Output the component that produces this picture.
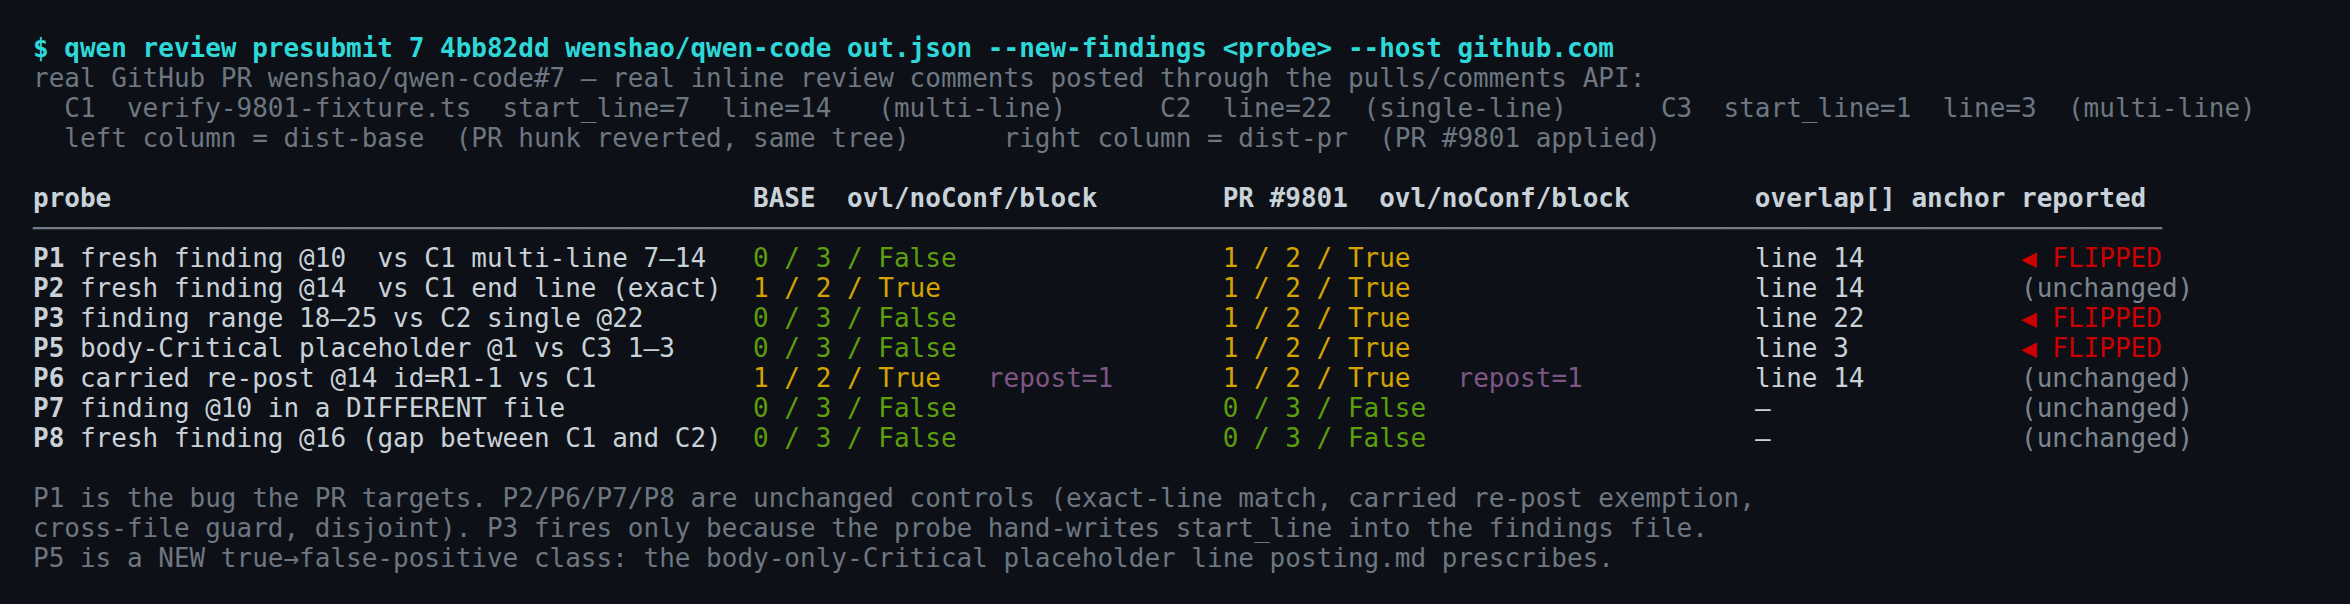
import React from "react"

type Val = "F" | "T"

type Row = {
  id: string
  desc: string
  base: Val
  pr: Val
  repost?: boolean
  anchor: string
  flipped: boolean
}

const rows: Row[] = [
  { id: "P1", desc: "fresh finding @10  vs C1 multi-line 7–14", base: "F", pr: "T", anchor: "line 14", flipped: true },
  { id: "P2", desc: "fresh finding @14  vs C1 end line (exact)", base: "T", pr: "T", anchor: "line 14", flipped: false },
  { id: "P3", desc: "finding range 18–25 vs C2 single @22", base: "F", pr: "T", anchor: "line 22", flipped: true },
  { id: "P5", desc: "body-Critical placeholder @1 vs C3 1–3", base: "F", pr: "T", anchor: "line 3", flipped: true },
  { id: "P6", desc: "carried re-post @14 id=R1-1 vs C1", base: "T", pr: "T", repost: true, anchor: "line 14", flipped: false },
  { id: "P7", desc: "finding @10 in a DIFFERENT file", base: "F", pr: "F", anchor: "–", flipped: false },
  { id: "P8", desc: "fresh finding @16 (gap between C1 and C2)", base: "F", pr: "F", anchor: "–", flipped: false },
]

// terminal columns: probe 0, BASE 46, PR 76, anchor 110, reported 127
function Verdict({ v, repost, width }: { v: Val; repost?: boolean; width: number }) {
  const text = v === "T" ? "1 / 2 / True" : "0 / 3 / False"
  const tail = repost ? "   repost=1" : ""
  const pad = " ".repeat(width - text.length - tail.length)
  return (
    <>
      <span className={v === "T" ? "text-[#d4a300]" : "text-[#5c9e0c]"}>{text}</span>
      {repost && <span className="text-[#7e5683]">{tail}</span>}
      {pad}
    </>
  )
}

export default function App() {
  return (
    <div className="min-h-screen w-full bg-[#0d1117] px-[33px] pt-[33px] font-['DejaVu_Sans_Mono',monospace] text-[26px] leading-[30px] whitespace-pre text-[#6e7681]">
      <div className="font-bold text-[#2ed8d8]">
        $ qwen review presubmit 7 4bb82dd wenshao/qwen-code out.json --new-findings &lt;probe&gt; --host github.com
      </div>
      <div>real GitHub PR wenshao/qwen-code#7 — real inline review comments posted through the pulls/comments API:</div>
      <div>
        {"  C1  verify-9801-fixture.ts  start_line=7  line=14   (multi-line)      C2  line=22  (single-line)      C3  start_line=1  line=3  (multi-line)"}
      </div>
      <div>{"  left column = dist-base  (PR hunk reverted, same tree)      right column = dist-pr  (PR #9801 applied)"}</div>
      <div>{" "}</div>

      <div className="font-bold text-[#c9d1d9]">
        {"probe".padEnd(46) + "BASE  ovl/noConf/block".padEnd(30) + "PR #9801  ovl/noConf/block".padEnd(34) + "overlap[] anchor reported"}
      </div>
      <div className="text-[#737b86]">{"─".repeat(136)}</div>

      {rows.map((r) => (
        <div key={r.id} className="text-[#c9d1d9]">
          <span className="font-bold">{r.id}</span>
          {(" " + r.desc).padEnd(44)}
          <Verdict v={r.base} repost={r.repost} width={30} />
          <Verdict v={r.pr} repost={r.repost} width={34} />
          {r.anchor.padEnd(17)}
          {r.flipped ? (
            <span className="text-[#cc0000]">◀ FLIPPED</span>
          ) : (
            <span className="text-[#7d8590]">(unchanged)</span>
          )}
        </div>
      ))}

      <div>{" "}</div>
      <div>P1 is the bug the PR targets. P2/P6/P7/P8 are unchanged controls (exact-line match, carried re-post exemption,</div>
      <div>cross-file guard, disjoint). P3 fires only because the probe hand-writes start_line into the findings file.</div>
      <div>P5 is a NEW true→false-positive class: the body-only-Critical placeholder line posting.md prescribes.</div>
    </div>
  )
}
